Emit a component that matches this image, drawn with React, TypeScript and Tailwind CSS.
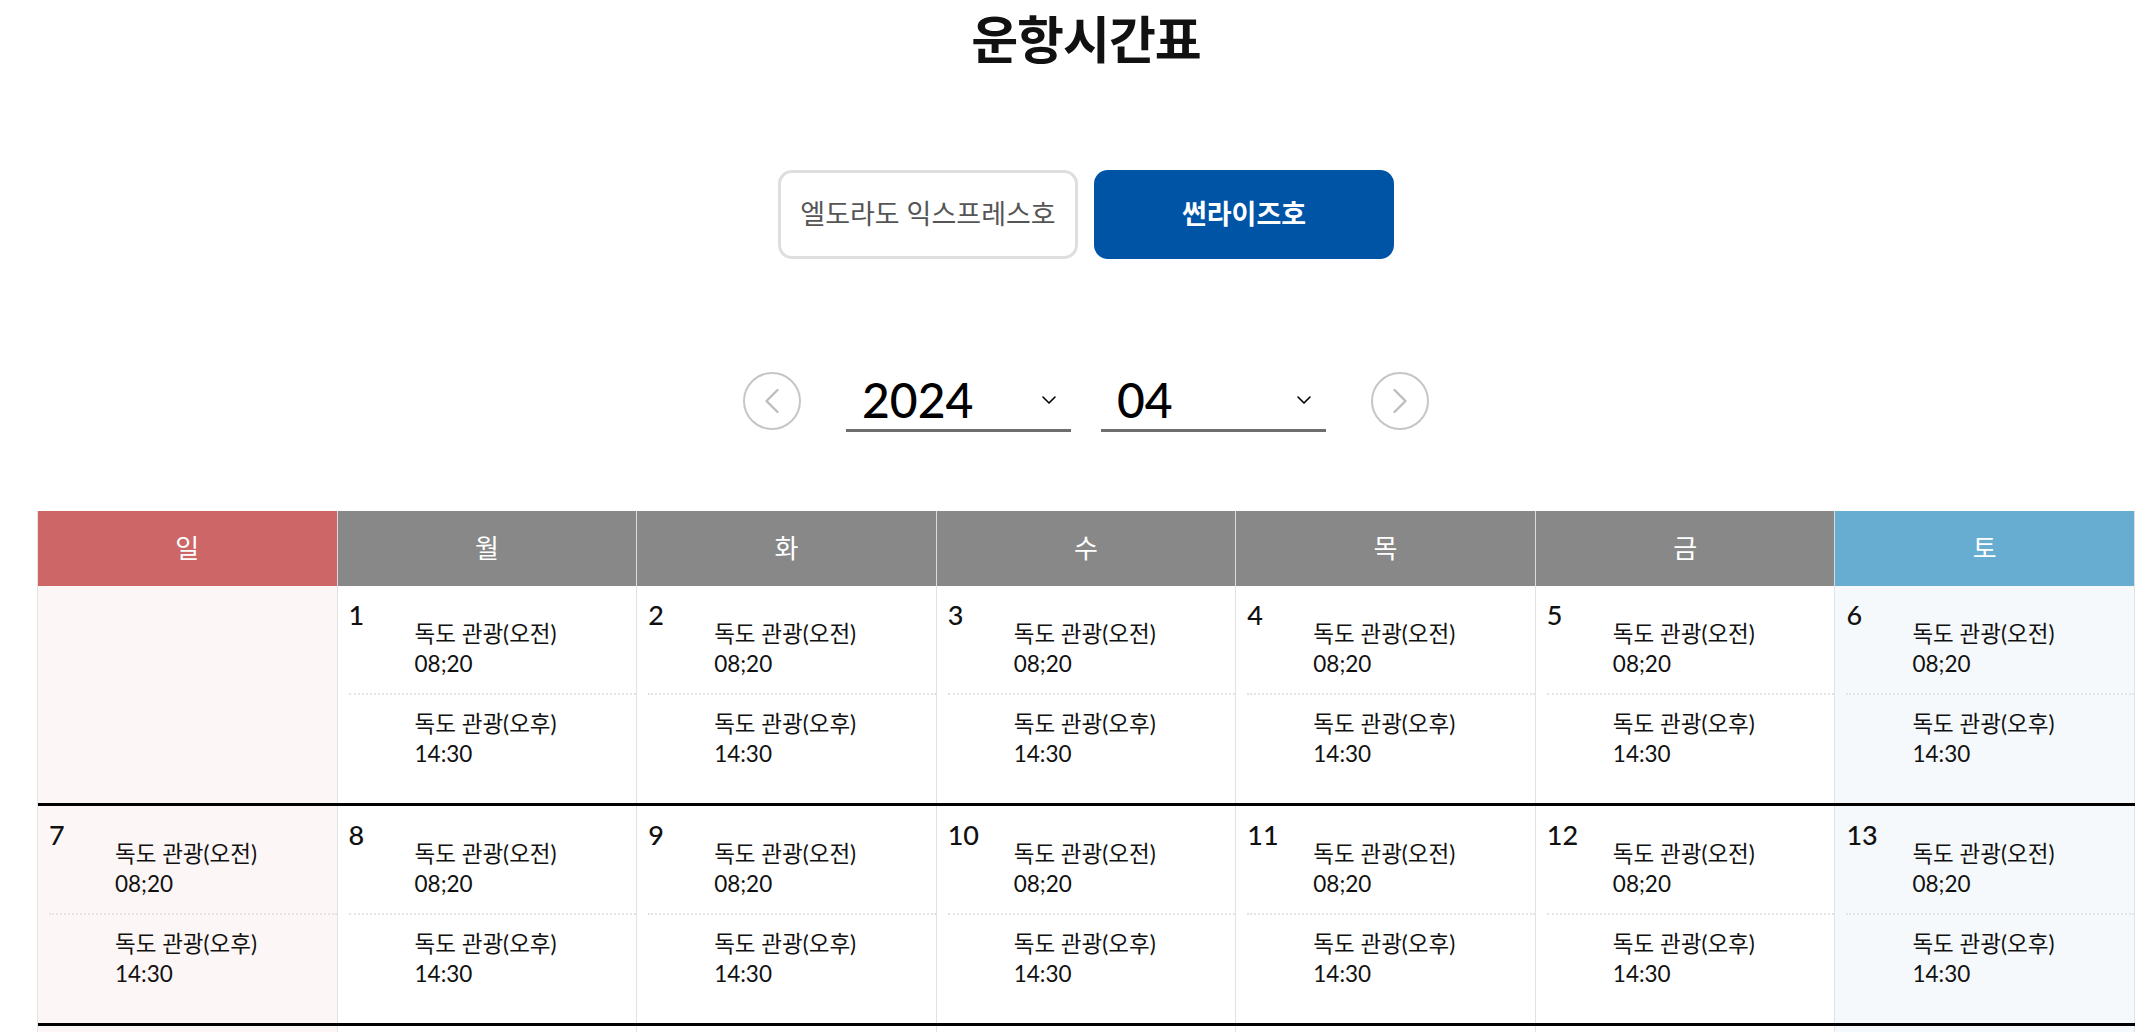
import { ChevronDown, ChevronLeft, ChevronRight } from "lucide-react";

const FONT = "font-['Lato','Noto_Sans_CJK_KR',sans-serif]";

const DAYS = [
  { label: "일", bg: "bg-[#cd6667]", cell: "bg-[#fdf6f6]" },
  { label: "월", bg: "bg-[#888888]", cell: "bg-white" },
  { label: "화", bg: "bg-[#888888]", cell: "bg-white" },
  { label: "수", bg: "bg-[#888888]", cell: "bg-white" },
  { label: "목", bg: "bg-[#888888]", cell: "bg-white" },
  { label: "금", bg: "bg-[#888888]", cell: "bg-white" },
  { label: "토", bg: "bg-[#67acd1]", cell: "bg-[#f6f9fc]" },
];

// April 2024 starts on a Monday
const buildWeeks = () => {
  const cells: (number | null)[] = [null];
  for (let d = 1; d <= 30; d++) cells.push(d);
  while (cells.length % 7 !== 0) cells.push(null);
  const weeks: (number | null)[][] = [];
  for (let i = 0; i < cells.length; i += 7) weeks.push(cells.slice(i, i + 7));
  return weeks;
};

const DayCell = ({ day, cell }: { day: number | null; cell: string }) => {
  return (
    <div className={`${cell} h-[217px] border-r border-[#e2e2e2] pl-[11px] pt-[12px] text-[#111]`}>
      {day !== null && (
        <>
          <div className="flex border-b-2 border-dotted border-[#e4e4e4]">
            <span className="w-[66px] shrink-0 text-[27px] leading-[34px] font-medium">{day}</span>
            <div className="pt-[21px] pb-[14px] text-[22.5px] leading-[30px]">
              <p>독도 관광(오전)</p>
              <p>08;20</p>
            </div>
          </div>
          <div className="flex">
            <span className="w-[66px] shrink-0" />
            <div className="pt-[14px] text-[22.5px] leading-[30px]">
              <p>독도 관광(오후)</p>
              <p>14:30</p>
            </div>
          </div>
        </>
      )}
    </div>
  );
};

const App = () => {
  const weeks = buildWeeks();

  return (
    <div className={`${FONT} bg-white min-h-screen pl-[37px] pr-[18px]`}>
      <h1 className="pt-[9px] text-center text-[51px] font-bold leading-[62px] tracking-[-1px] text-[#111]">
        운항시간표
      </h1>

      <div className="mt-[99px] flex justify-center gap-[16px]">
        <button className="h-[89px] w-[300px] rounded-[14px] border-[3px] border-[#dedede] bg-white text-[27px] text-[#555]">
          엘도라도 익스프레스호
        </button>
        <button className="h-[89px] w-[300px] rounded-[14px] bg-[#0054a6] text-[27px] font-bold text-white">
          썬라이즈호
        </button>
      </div>

      <div className="mt-[111px] flex items-center justify-center">
        <button className="flex h-[58px] w-[58px] items-center justify-center rounded-full border-2 border-[#c6c6c6] text-[#bdbdbd]">
          <ChevronLeft size={44} strokeWidth={1.3} />
        </button>

        <div className="ml-[45px] flex h-[62px] w-[225px] items-center justify-between border-b-[3px] border-[#6e6e6e] pl-[16px] pr-[10px]">
          <span className="text-[48px] font-medium leading-none text-black">2024</span>
          <ChevronDown size={24} strokeWidth={1.6} className="text-black" />
        </div>

        <div className="ml-[30px] flex h-[62px] w-[225px] items-center justify-between border-b-[3px] border-[#6e6e6e] pl-[16px] pr-[10px]">
          <span className="text-[48px] font-medium leading-none text-black">04</span>
          <ChevronDown size={24} strokeWidth={1.6} className="text-black" />
        </div>

        <button className="ml-[45px] flex h-[58px] w-[58px] items-center justify-center rounded-full border-2 border-[#c6c6c6] text-[#bdbdbd]">
          <ChevronRight size={44} strokeWidth={1.3} />
        </button>
      </div>

      <div className="mt-[79px] border-l border-[#e2e2e2]">
        <div className="grid grid-cols-7">
          {DAYS.map((d) => (
            <div
              key={d.label}
              className={`${d.bg} flex h-[75px] items-center justify-center border-r border-[#dcdcdc] text-[26px] text-white`}
            >
              {d.label}
            </div>
          ))}
        </div>

        {weeks.map((week, wi) => (
          <div key={wi} className={`grid grid-cols-7 ${wi > 0 ? "border-t-[3px] border-black" : ""}`}>
            {week.map((day, i) => (
              <DayCell key={i} day={day} cell={DAYS[i].cell} />
            ))}
          </div>
        ))}
      </div>
    </div>
  );
};

export default App;
